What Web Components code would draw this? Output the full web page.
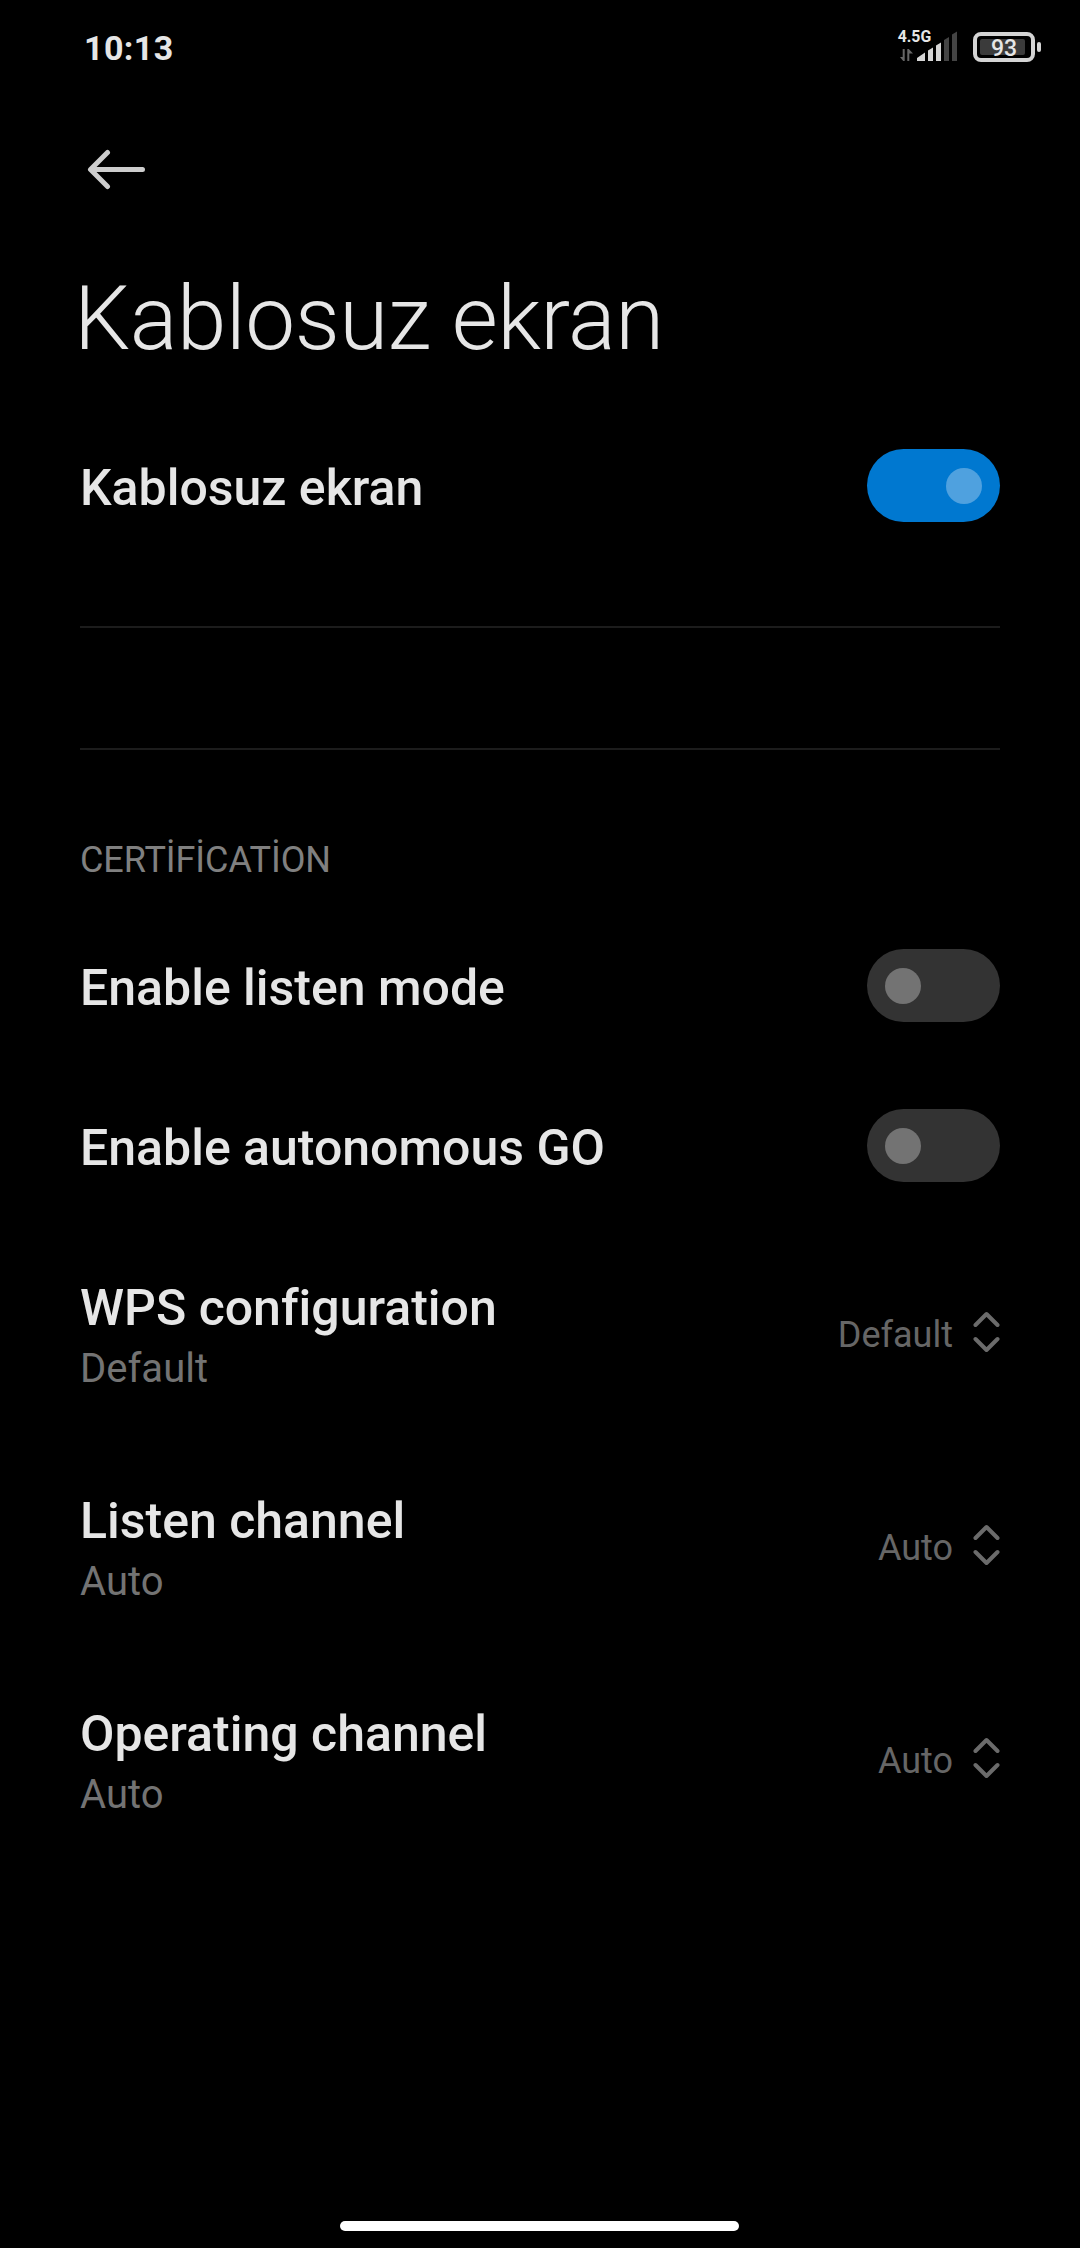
<!DOCTYPE html>
<html lang="tr"><head><meta charset="utf-8"><title>Kablosuz ekran</title>
<style>html,body{margin:0;background:#000}body{font-family:Roboto,"Noto Sans",sans-serif;color:#e6e6e6}</style></head>
<body>
<settings-screen>
<status-bar slot="status" time="10:13" network="4.5G" battery="93"></status-bar>
<page-header slot="header">Kablosuz ekran</page-header>
<setting-row label="Kablosuz ekran"><toggle-switch on></toggle-switch></setting-row>
<rule-line style="--before:60.5px;--after:120px"></rule-line>
<rule-line style="--after:74px"></rule-line>
<section-label>CERTİFİCATİON</section-label>
<setting-row label="Enable listen mode"><toggle-switch></toggle-switch></setting-row>
<setting-row label="Enable autonomous GO"><toggle-switch></toggle-switch></setting-row>
<setting-row label="WPS configuration" summary="Default"><drop-value>Default</drop-value></setting-row>
<setting-row label="Listen channel" summary="Auto"><drop-value>Auto</drop-value></setting-row>
<setting-row label="Operating channel" summary="Auto"><drop-value>Auto</drop-value></setting-row>
</settings-screen>
<script>
const define=(name,render)=>customElements.define(name,class extends HTMLElement{
  connectedCallback(){ if(!this.shadowRoot) this.attachShadow({mode:'open'}).innerHTML=render(this); }
});

define('settings-screen',()=>`<style>
:host{display:flex;flex-direction:column;width:1080px;height:2248px;background:#000;overflow:hidden}
main{display:flex;flex-direction:column;flex:1;padding:0 80px}
footer{display:flex;justify-content:center;height:27px;padding-right:1px}
i{display:block;width:399px;height:10px;border-radius:5px;background:#fff}
</style><slot name="status"></slot><slot name="header"></slot><main><slot></slot></main><footer><i></i></footer>`);

define('status-bar',e=>`<style>
:host{display:flex;justify-content:space-between;height:94px;padding:0 38px 0 84px;box-sizing:border-box}
time{font-size:34px;line-height:40px;font-weight:700;letter-spacing:.4px;padding-top:28px}
.right{display:flex;gap:15px;padding-top:23px}
svg{display:block;flex:none}
text{font-family:Roboto,sans-serif}
</style><time>${e.getAttribute('time')}</time>
<div class="right">
<svg width="66" height="40" viewBox="892 23 66 40">
<text x="897.700" y="42.300" font-size="15.800" font-weight="700" fill="#e6e6e6">${e.getAttribute('network')}</text>
<path d="M902.700 49h2v12h-1.500L900 57h2.700zM909.300 61h-2V49h1.500L913 53.500h-3.700z" fill="#666"/>
<path d="M917 61v-3l8-5.500V61zM928 61V50.500l5-3V61zM936 61V45.500l5-3V61z" fill="#d6d6d6"/>
<path d="M944 61V40l5-3V61zM952 61V34.500l5-3V61z" fill="#444"/>
</svg>
<svg width="69" height="40" viewBox="973 23 69 40">
<rect x="975" y="34" width="58" height="26" rx="6" fill="none" stroke="#d4d4d4" stroke-width="4"/>
<rect x="980" y="39" width="45" height="16" rx="2" fill="#3b3b3b"/>
<rect x="1037" y="42" width="4" height="10" rx="2" fill="#d4d4d4"/>
<text x="1004" y="56" font-size="23" font-weight="500" text-anchor="middle" fill="#e6e6e6">${e.getAttribute('battery')}</text>
</svg></div>`);

define('page-header',()=>`<style>
:host{display:flex;flex-direction:column;gap:77px;height:311.5px;padding:54px 74px 0;box-sizing:border-box}
svg{display:block;margin-left:11px}
h1{margin:0;font-size:89px;line-height:104px;font-weight:300;letter-spacing:-.5px;white-space:nowrap}
</style><svg width="62" height="42" viewBox="85 148 62 42" fill="none" stroke="#cdcdcd" stroke-width="5" stroke-linecap="round" stroke-linejoin="round"><path d="M107.500 152.500L90.500 169.500L107.500 186.500M91 169.500H142.500"/></svg><h1><slot></slot></h1>`);

define('setting-row',e=>{const s=e.getAttribute('summary');return `<style>
:host{display:flex;align-items:center;justify-content:space-between;height:${s?213:160}px}
.t{display:flex;flex-direction:column;gap:2px;padding-top:${s?7:0}px}
b{font-size:50px;line-height:60px;font-weight:500;white-space:nowrap;padding-top:5px}
span{font-size:40px;line-height:58px;color:#737373}
</style><div class="t"><b>${e.getAttribute('label')}</b>${s?`<span>${s}</span>`:''}</div><slot></slot>`});

define('toggle-switch',e=>{const on=e.hasAttribute('on');return `<style>
:host{display:flex;align-items:center;justify-content:${on?'flex-end':'flex-start'};box-sizing:border-box;width:133.5px;height:73px;border-radius:37px;padding:0 18.5px;background:${on?'#0078d0':'#333'}}
i{width:36px;height:36px;border-radius:50%;background:${on?'#4fa1df':'#737373'}}
</style><i></i>`});

define('rule-line',()=>`<style>:host{display:block;height:2px;margin:var(--before,0) 0 var(--after,0);background:#1c1c1c}</style>`);
define('section-label',()=>`<style>:host{display:block;height:81.5px;font-size:36px;line-height:72px;letter-spacing:-.08px;color:#808080}</style><slot></slot>`);
define('drop-value',()=>`<style>
:host{display:flex;align-items:center;gap:20px;font-size:36px;line-height:44px;color:#666}
div{padding-top:5px}
svg{display:block}
</style><div><slot></slot></div><svg width="27" height="42" viewBox="0 0 27 42" fill="none" stroke="#6b6b6b" stroke-width="4" stroke-linecap="round" stroke-linejoin="round"><path d="M2.500 14L13.500 3L24.500 14M2.500 28L13.500 39L24.500 28"/></svg>`);
</script></body></html>
